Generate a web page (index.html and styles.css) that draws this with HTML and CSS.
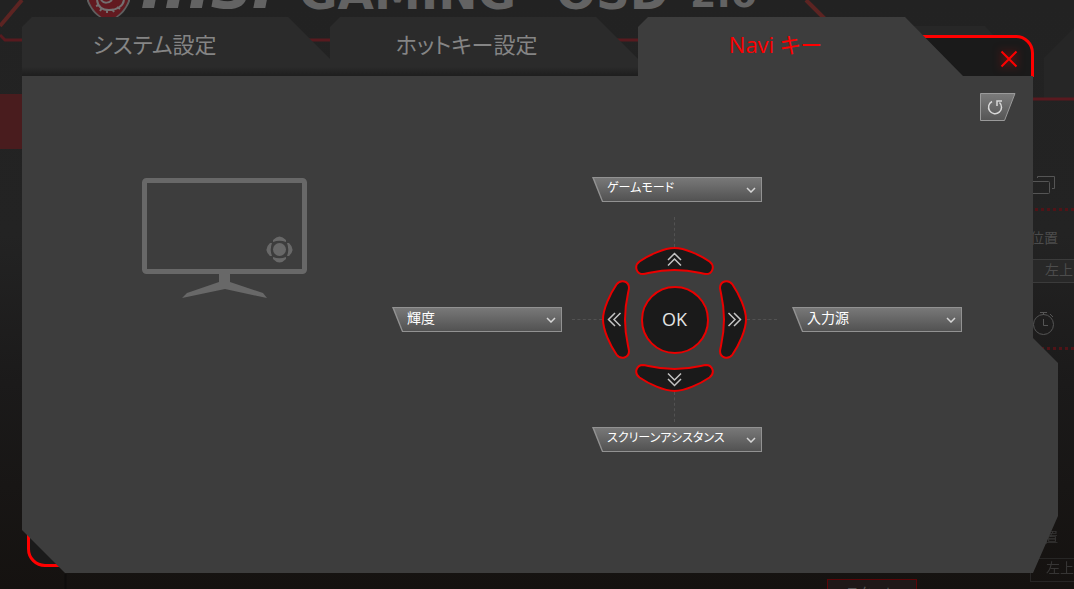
FILE: index.html
```html
<!DOCTYPE html>
<html lang="ja">
<head>
<meta charset="utf-8">
<meta name="viewport" content="width=device-width, initial-scale=1">
<title>Navi キー</title>
<link rel="stylesheet" href="styles.css">
</head>
<body>
<svg class="backdrop" width="1074" height="589" viewBox="0 0 1074 589" aria-hidden="true">
  <path d="M0 35L5 40H830" fill="none" stroke="#581a1f" stroke-width="3"/>
  <path d="M0 26L22 0" fill="none" stroke="#5c2422" stroke-width="4"/>
  <path d="M806 0L826 20" fill="none" stroke="#5c2422" stroke-width="4"/>
  <path d="M0 94H22V149H0Z" fill="#491c1e"/>
  <path d="M87 -12V1C90 9 95 15 101 18H116C122 15 127 9 130 1V-12Z" fill="#5f5f5f"/>
  <path d="M89 -12V1C92 9 97 14 103 18H114C120 14 125 9 128 1V-12Z" fill="#621a20"/>
  <path d="M97 0C98 7 103 10 109 10C117 10 123 6 124 0M101 0C104 4 109 3 112 0M99 5l-3 1M102 8l-2 3M107 10v3M112 9l2 3M117 7l3 2" fill="none" stroke="#747070" stroke-width="2"/>
  <text class="logo logo-msi" x="140" y="8">msi</text>
  <text class="logo" x="299" y="9">GAMING</text>
  <text class="logo" x="556" y="9">OSD</text>
  <text class="logo logo-small" x="690" y="7">2.0</text>
  <path d="M910 26H985L994 36V80H910Z" fill="#272727"/>
  <path d="M1044 98V58L1074 28V98Z" fill="#262626"/>
  <path d="M1030 99H1074" stroke="#5a191f" stroke-width="3"/>
  <g fill="none" stroke="#555" stroke-width="1">
    <rect x="1028.500" y="181.500" width="21" height="12" rx="1"/>
    <path d="M1037.500 178V176.500H1054.500V188.500H1052"/>
    <circle cx="1043.500" cy="324.500" r="10"/>
    <path d="M1040 312.500H1047M1043.500 312V315M1050 314L1053 317M1043.500 319V325.500H1048"/>
  </g>
  <path d="M1035 209.500H1074M1035 348.500H1074" stroke="#501317" stroke-width="3" stroke-dasharray="3 3"/>
  <text class="side" x="1030" y="243">位置</text>
  <path d="M1030 260H1074V282H1030Z" fill="#282828"/>
  <path d="M1030 259.500H1074M1030 282.500H1074" stroke="#3b3b3b"/>
  <text class="side" x="1045" y="275">左上</text>
  <g class="dim">
    <text class="side" x="1030" y="542">位置</text>
    <path d="M1030 558.500H1074M1030 581.500H1074M1030.500 558V582" stroke="#333"/>
    <text class="side" x="1046" y="573">左上</text>
  </g>
  <rect x="827.500" y="579.500" width="89" height="20" fill="#1f1818" stroke="#5b0508"/>
  <text class="start" x="871" y="598" text-anchor="middle">スタート</text>
  <path d="M65.500 574V589" stroke="#0f0d0c" stroke-width="2"/>
</svg>

<svg class="defs" aria-hidden="true">
  <symbol id="arc" overflow="visible">
    <path class="arc-shape" d="M39.500 1C29 1 14 8 4.500 14.500C-1.500 19 1.500 27 8 27C13 26.500 22 23 39.500 23C57 23 66 26.500 71 27C77.500 27 80.500 19 74.500 14.500C65 8 50 1 39.500 1Z"/>
    <path class="arc-arrow" d="M33 13L39.500 6.500L46 13M33 18.500L39.500 12L46 18.500"/>
  </symbol>
  <symbol id="chevron" viewBox="0 0 10 6"><path d="M1 1L5 5L9 1" fill="none" stroke="#d6d6d6" stroke-width="1.500"/></symbol>
</svg>

<main class="dialog">
  <div class="frame"></div>
  <header class="head">
    <nav class="tabs" role="tablist">
      <button class="tab" type="button" role="tab">システム設定</button>
      <button class="tab tab-middle" type="button" role="tab">ホットキー設定</button>
      <button class="tab tab-active" type="button" role="tab" aria-selected="true">Navi キー</button>
    </nav>
    <button class="close" type="button" aria-label="閉じる">
      <svg width="18" height="18" viewBox="0 0 18 18"><path d="M1.500 1.500L16.500 16.500M16.500 1.500L1.500 16.500" stroke="#f00" stroke-width="2"/></svg>
    </button>
  </header>

  <section class="panel">
    <div class="toolbar">
      <button class="reset" type="button" aria-label="リセット">
        <svg width="36" height="28" viewBox="0 0 36 28">
          <defs><linearGradient id="resetFill" x1="0" y1="0" x2="0" y2="1"><stop offset="0" stop-color="#7b7b7b"/><stop offset="1" stop-color="#555"/></linearGradient></defs>
          <path d="M.500 .500H35L24.500 27.500H.500Z" fill="url(#resetFill)" stroke="#9a9a9a"/>
          <path d="M12 8.500A6.500 6.500 0 1 0 19.500 9.500M17 13V8H22" fill="none" stroke="#d8d8d8" stroke-width="1.500"/>
        </svg>
      </button>
    </div>

    <div class="content">
      <svg class="monitor" width="166" height="122" viewBox="0 0 166 122" aria-hidden="true">
        <rect x="2.500" y="3.500" width="160" height="91" rx="2" fill="none" stroke="#686868" stroke-width="5"/>
        <path d="M77 96H88V105L121 116L125 121L83 112L40 121L45 116L77 105Z" fill="#686868"/>
        <g fill="#686868">
          <circle cx="137.500" cy="72.500" r="6.500"/>
          <path id="petal" d="M131 63Q137.500 56 144 63V65Q137.500 62.500 131 65Z"/>
          <use href="#petal" transform="rotate(90 137.500 72.500)"/>
          <use href="#petal" transform="rotate(180 137.500 72.500)"/>
          <use href="#petal" transform="rotate(270 137.500 72.500)"/>
        </g>
      </svg>

      <div class="mapping">
        <div class="picker picker-kana picker-up">
          <select aria-label="上キー"><option>ゲームモード</option></select>
          <svg class="chevron" width="10" height="6"><use href="#chevron"/></svg>
        </div>
        <div class="picker picker-left">
          <select aria-label="左キー"><option>輝度</option></select>
          <svg class="chevron" width="10" height="6"><use href="#chevron"/></svg>
        </div>
        <div class="pad">
          <i class="link link-up"></i>
          <button class="key key-up" type="button" aria-label="上"><svg width="79" height="28"><use href="#arc"/></svg></button>
          <i class="link link-left"></i>
          <button class="key key-left" type="button" aria-label="左"><svg width="28" height="79"><use href="#arc" transform="matrix(0 -1 1 0 0 79)"/></svg></button>
          <button class="ok" type="button">OK</button>
          <button class="key key-right" type="button" aria-label="右"><svg width="28" height="79"><use href="#arc" transform="matrix(0 1 -1 0 28 0)"/></svg></button>
          <i class="link link-right"></i>
          <button class="key key-down" type="button" aria-label="下"><svg width="79" height="28"><use href="#arc" transform="matrix(1 0 0 -1 0 28)"/></svg></button>
          <i class="link link-down"></i>
        </div>
        <div class="picker picker-right">
          <select aria-label="右キー"><option>入力源</option></select>
          <svg class="chevron" width="10" height="6"><use href="#chevron"/></svg>
        </div>
        <div class="picker picker-kana picker-down">
          <select aria-label="下キー"><option>スクリーンアシスタンス</option></select>
          <svg class="chevron" width="10" height="6"><use href="#chevron"/></svg>
        </div>
      </div>
    </div>
  </section>
</main>
</body>
</html>
```

FILE: styles.css
```css
* { box-sizing: border-box; }

body {
  margin: 0;
  min-height: 100vh;
  position: relative;
  overflow: hidden;
  background: linear-gradient(#222 0, #232323 40%, #1b1a1a 65%, #151210 100%);
  font-family: "Open Sans", "Noto Sans CJK JP", sans-serif;
  font-feature-settings: "palt";
  color: #fff;
}

button, select {
  margin: 0;
  padding: 0;
  border: 0;
  background: none;
  color: inherit;
  font: inherit;
  font-feature-settings: inherit;
}

button { cursor: pointer; }
svg { display: block; }
.defs { position: absolute; width: 0; height: 0; }

/* Dimmed main window */
.backdrop { position: absolute; top: 0; left: 0; }
.logo { font: bold 47px "DejaVu Sans", sans-serif; fill: #636363; }
.logo-msi { font-size: 68px; font-style: italic; }
.logo-small { font-size: 38px; }
.side { font-size: 14px; fill: #4c4c4c; }
.start { font-size: 14px; fill: #555; }
.dim { opacity: .6; }

/* Dialog */
.dialog {
  position: relative;
  display: flex;
  flex-direction: column;
  min-height: 100vh;
  padding: 17px 16px 16px 22px;
}

.frame {
  position: absolute;
  inset: 35px 40px 22px 27px;
  border: 3px solid #f00;
  border-radius: 18px;
  background: #1a1a1a;
  clip-path: polygon(calc(100% - 140px) 0, 100% 0, 100% 42px, calc(100% - 60px) 42px, 60px 100%, 0 100%, 0 calc(100% - 60px));
}

.head {
  position: relative;
  display: grid;
  grid-template-columns: 1fr 70px;
  margin-right: 25px;
}

.tabs { display: grid; grid-template-columns: 308fr 308fr 325fr; }

.tab {
  height: 59px;
  padding: 0 43px 6px 0;
  background: linear-gradient(#2b2b2b 0, #2b2b2b 84%, #1e1e1e 100%);
  clip-path: polygon(10px 0, calc(100% - 42px) 0, 100% 42px, 100% 100%, 0 100%, 0 10px);
  color: #858585;
  font-size: 22px;
  line-height: 30px;
}

.tab-middle { padding-right: 35px; }

.tab-active {
  padding-right: 50px;
  background: #3d3d3d;
  clip-path: polygon(10px 0, calc(100% - 58px) 0, 100% 100%, 0 100%, 0 10px);
  color: #f00;
}

.close { display: grid; justify-content: end; align-content: end; padding: 0 15px 8px 0; }
.close svg { filter: drop-shadow(0 0 5px #f00a); }

.panel {
  position: relative;
  flex: 1;
  background: #3d3d3d;
  clip-path: polygon(0 0, calc(100% - 25px) 0, calc(100% - 25px) 262px, 100% 287px, 100% calc(100% - 57px), calc(100% - 25px) 100%, 43px 100%, 0 calc(100% - 43px));
}

.toolbar { display: flex; justify-content: flex-end; padding: 16px 42px 0; }
.reset { height: 29px; }

.content {
  display: flex;
  justify-content: space-between;
  padding: 56px 96px 32px 120px;
}

.mapping {
  display: grid;
  grid-template-columns: 170px 230px 170px;
  grid-template-areas: ". up ." "left pad right" ". down .";
  justify-items: center;
}

.picker {
  display: grid;
  grid-template-columns: 1fr;
  align-items: center;
  width: 170px;
  height: 25px;
  padding: 1px;
  background: #929292;
  clip-path: polygon(0 0, 100% 0, 100% 100%, 10px 100%);
}
.picker select {
  grid-area: 1 / 1;
  appearance: none;
  width: 100%;
  height: 23px;
  padding: 0 24px 3px 14px;
  border-radius: 0;
  background: linear-gradient(#787878, #525252);
  clip-path: polygon(1px 0, 100% 0, 100% 100%, 10px 100%);
  font-size: 14px;
  line-height: 20px;
  outline: 0;
}
.picker-kana select { font-size: 12px; }
.chevron { grid-area: 1 / 1; justify-self: end; margin-right: 5px; z-index: 1; pointer-events: none; }

.picker-up { grid-area: up; }
.picker-down { grid-area: down; }
.picker-left { grid-area: left; align-self: center; margin-top: 10px; }
.picker-right { grid-area: right; align-self: center; margin-top: 10px; }

/* Five-way key pad */
.pad {
  grid-area: pad;
  display: grid;
  grid-template-columns: 30px 28px 89px 28px 30px;
  grid-template-rows: 30px 28px 89px 28px 30px;
  place-items: center;
  margin: 15px 5px 5px 0;
}
.key-up { grid-area: 2 / 3; }
.key-left { grid-area: 3 / 2; }
.key-right { grid-area: 3 / 4; }
.key-down { grid-area: 4 / 3; }
.arc-shape { fill: #1a1a1a; stroke: #ea0000; stroke-width: 2; }
.arc-arrow { fill: none; stroke: #c4c4c4; stroke-width: 1.5; }

.ok {
  grid-area: 3 / 3;
  width: 68px;
  height: 68px;
  padding-bottom: 2px;
  border: 2px solid #ea0000;
  border-radius: 50%;
  background: #1a1a1a;
  color: #e4e4e4;
  font-size: 18px;
  line-height: 24px;
}

.link { border: 0 dashed #525252; }
.link-up { grid-area: 1 / 3; height: 30px; border-left-width: 1px; }
.link-down { grid-area: 5 / 3; height: 30px; border-left-width: 1px; }
.link-left { grid-area: 3 / 1; width: 30px; border-top-width: 1px; }
.link-right { grid-area: 3 / 5; width: 30px; border-top-width: 1px; }
```
